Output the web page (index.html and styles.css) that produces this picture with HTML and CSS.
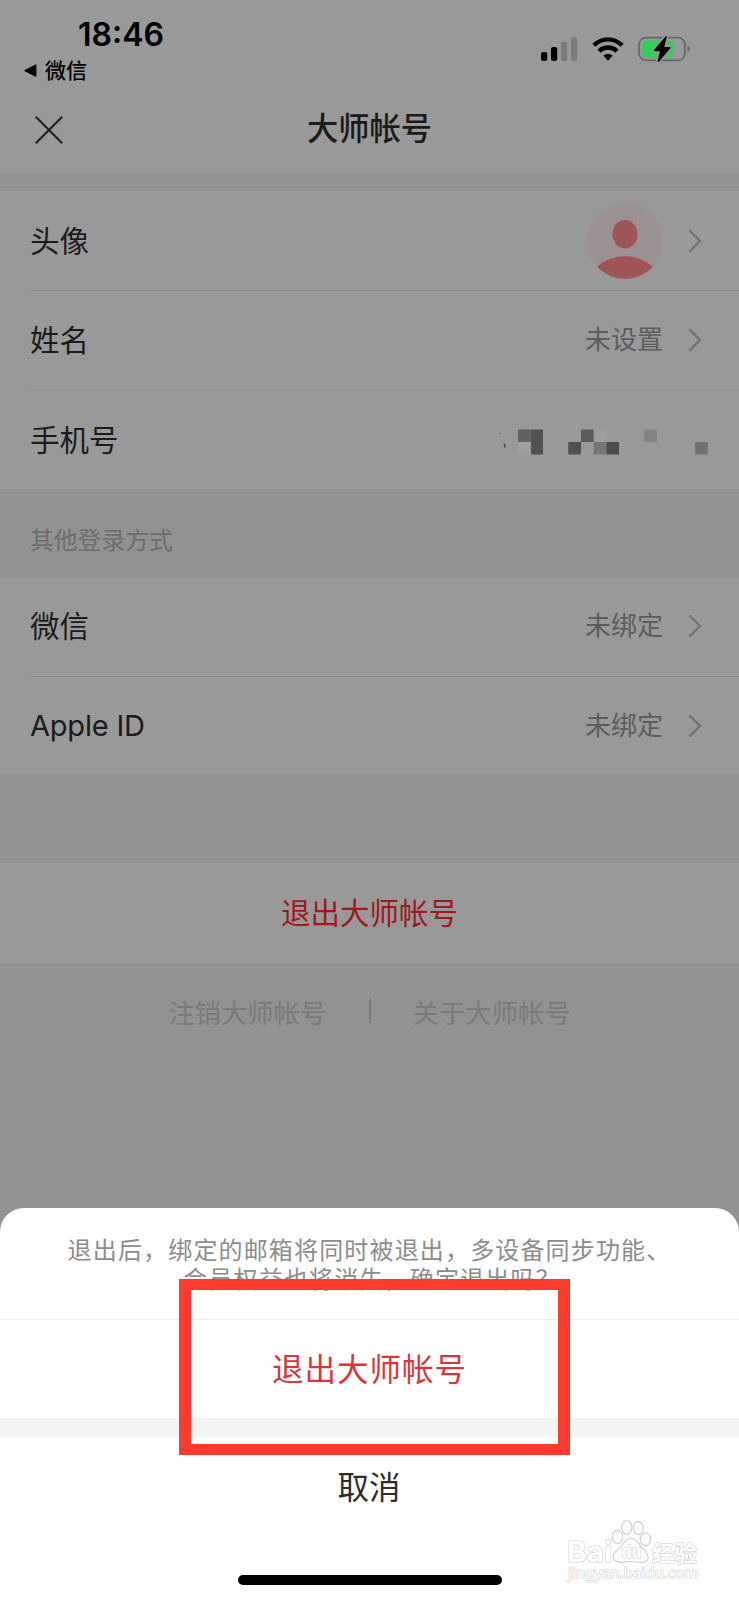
FILE: index.html
```html
<!DOCTYPE html>
<html lang="zh-CN">
<head>
<meta charset="utf-8">
<title>大师帐号</title>
<link rel="stylesheet" href="styles.css">
</head>
<body>
<div class="screen">
  <header class="top">
    <div class="status">
      <div class="status-left">
        <div class="clock">18:46</div>
        <div class="back-app">
          <svg width="14" height="13" viewBox="0 0 14 13"><path d="M12.4 .6V12.4Q12.4 13 11.6 12.7L.8 7.3Q-.2 6.7 .8 6.1L11.6 .4Q12.4 0 12.4 .6Z"/></svg>
          <span>微信</span>
        </div>
      </div>
      <div class="status-icons">
        <svg class="signal" width="37" height="24" viewBox="0 0 37 24">
          <rect x="0" y="15" width="6.2" height="9" rx="2"/>
          <rect x="10" y="10" width="6.2" height="14" rx="2"/>
          <rect x="20" y="5" width="6.2" height="19" rx="2" fill="#7b7b7b"/>
          <rect x="30" y="0" width="6.2" height="24" rx="2" fill="#7b7b7b"/>
        </svg>
        <svg class="wifi" width="32" height="24" viewBox="0 0 32 24">
          <g fill="none" stroke="#000" stroke-width="4.3">
            <path d="M1.8 8.3Q8.2 2.3 16 2.3T30.2 8.3"/>
            <path d="M7 14.1Q11 10.5 16 10.5T25 14.1"/>
          </g>
          <path d="M11.3 18.6Q16 14.8 20.7 18.6L16.8 23Q16 23.8 15.2 23Z"/>
        </svg>
        <svg class="battery" width="53" height="28" viewBox="0 0 53 28">
          <rect x="1" y="2.7" width="46" height="22.6" rx="7" fill="none" stroke="#666" stroke-width="1.7"/>
          <rect x="3.8" y="5.4" width="31.5" height="17.2" rx="4.2" fill="#33cc5a"/>
          <path d="M49.5 10.4Q52 11.4 52 14T49.5 17.6Z" fill="#666"/>
          <path d="M27.8 1.2L15.9 15.1Q15.5 16.2 16.6 16.2H22L19.5 26.5Q20 27.5 21.2 26.5L32.4 13.2Q32.8 12 31.7 12H26.3L28.8 1.7Q28.5 .6 27.8 1.2Z" stroke="#999" stroke-width="3" paint-order="stroke"/>
        </svg>
      </div>
    </div>
    <div class="navbar">
      <svg class="close" width="28" height="28" viewBox="0 0 28 28"><path d="M.8 .8L27.2 27.2M27.2 .8L.8 27.2"/></svg>
      <h1>大师帐号</h1>
    </div>
  </header>

  <section class="list">
    <div class="row">
      <span class="label">头像</span>
      <svg class="avatar" width="76" height="76" viewBox="0 0 76 76">
        <defs><clipPath id="disc"><circle cx="38" cy="38" r="38"/></clipPath></defs>
        <circle cx="38" cy="38" r="38" fill="#9b9092"/>
        <ellipse cx="38" cy="31.3" rx="12.5" ry="14.2" fill="#a15456"/>
        <ellipse cx="38" cy="86" rx="38" ry="32.7" fill="#a15456" clip-path="url(#disc)"/>
      </svg>
      <svg class="chevron" viewBox="0 0 14 24"><path d="M1.3 1.3L12 12L1.3 22.7"/></svg>
    </div>
    <div class="row lined">
      <span class="label">姓名</span>
      <span class="value">未设置</span>
      <svg class="chevron" viewBox="0 0 14 24"><path d="M1.3 1.3L12 12L1.3 22.7"/></svg>
    </div>
    <div class="row lined faint">
      <span class="label">手机号</span>
      <svg class="mosaic" width="211" height="26" viewBox="0 0 211 26">
        <path d="M.8 3.5L2.2 4.3L1.4 5.5ZM5.8 14L7.8 16L7.5 19L6 18Z" fill="#444"/>
        <path d="M20 .5h12.7v12.5h-12.7z" fill="#606060"/>
        <path d="M32.7 .5h12.3v25h-12.3z" fill="#515151"/>
        <path d="M20 13h12.7v12.5h-12.7zM95.7 .5h12.7v12.5h-12.7z" fill="#9e9e9e"/>
        <path d="M70.3 13h12.7v12.5h-12.7z" fill="#505050"/>
        <path d="M83 .5h12.7v12.5h-12.7z" fill="#5c5c5c"/>
        <path d="M95.7 13h12.7v12.5h-12.7z" fill="#76767a"/>
        <path d="M108.4 13h12.6v12.5h-12.6z" fill="#4c4c4c"/>
        <path d="M146.3 .5h12.7v12.5h-12.7z" fill="#838383"/>
        <path d="M197 13h12.7v12.5h-12.7z" fill="#717171"/>
      </svg>
    </div>
  </section>

  <h2>其他登录方式</h2>

  <section class="list second">
    <div class="row">
      <span class="label">微信</span>
      <span class="value">未绑定</span>
      <svg class="chevron" viewBox="0 0 14 24"><path d="M1.3 1.3L12 12L1.3 22.7"/></svg>
    </div>
    <div class="row lined">
      <span class="label latin">Apple ID</span>
      <span class="value">未绑定</span>
      <svg class="chevron" viewBox="0 0 14 24"><path d="M1.3 1.3L12 12L1.3 22.7"/></svg>
    </div>
  </section>

  <div class="logout">退出大师帐号</div>
  <nav class="links"><span>注销大师帐号</span><i></i><span>关于大师帐号</span></nav>

  <div class="sheet">
    <p class="message">退出后，绑定的邮箱将同时被退出，多设备同步功能、<br><span>会员权益也将消失，确定退出吗？</span></p>
    <div class="confirm">退出大师帐号</div>
    <div class="cancel">取消</div>
    <div class="home-bar"></div>
    <div class="highlight"></div>
    <svg class="watermark" width="140" height="70" viewBox="0 0 140 70">
      <g fill="#fff" stroke="#cfcfcf" stroke-width="1.2">
        <text x="2" y="42" class="wm-brand" textLength="45" lengthAdjust="spacingAndGlyphs">Bai</text>
        <g transform="translate(-2.5 0)">
          <ellipse cx="55" cy="17" rx="5.2" ry="6.6"/>
          <ellipse cx="64.3" cy="7.5" rx="5" ry="7"/>
          <ellipse cx="75.8" cy="8" rx="5" ry="6.6"/>
          <ellipse cx="83" cy="19.3" rx="5.2" ry="6.4"/>
          <path d="M61 23Q68.5 14 76 23Q78 27 82 30Q91 42 78 42.5Q68.500 40.500 60 42.500Q45 41 53.500 31Q59 27 61 23Z"/>
          <text x="59" y="38" class="wm-du" textLength="20" lengthAdjust="spacingAndGlyphs">du</text>
        </g>
        <text x="87" y="41" class="wm-cn" textLength="45" lengthAdjust="spacingAndGlyphs">经验</text>
        <text x="3" y="58" class="wm-url" textLength="130" lengthAdjust="spacingAndGlyphs">jingyan.baidu.com</text>
      </g>
    </svg>
  </div>
</div>
</body>
</html>
```
FILE: styles.css
```css
* { box-sizing: border-box; }
body { margin: 0; font-family: Inter, "Noto Sans CJK SC", sans-serif; }
h1, h2, p { margin: 0; font-weight: 400; }
svg { display: block; flex: none; overflow: visible; }

.screen {
  width: 739px;
  height: 1600px;
  display: flex;
  flex-direction: column;
  background: #929292;
  color: #1b1b1b;
  overflow: hidden;
}

.top { height: 173px; background: #999; margin-bottom: 18px; flex: none; }
.status { height: 88px; display: flex; justify-content: space-between; padding: 15px 48px 0 24px; color: #000; }
.clock { font-size: 32px; line-height: 39px; font-weight: 600; padding-left: 54px; }
.back-app { display: flex; align-items: center; gap: 7px; height: 32px; font-size: 21px; font-weight: 500; }
.back-app span { line-height: 32px; padding-top: 1px; }
.status-icons { display: flex; height: 28px; margin-top: 20px; align-items: center; }
.wifi { margin-left: 14px; }
.battery { margin-left: 14px; }

.navbar { height: 85px; display: flex; align-items: center; padding: 0 35px; }
.close { fill: none; stroke: #222; stroke-width: 2.2; margin-top: -1px; }
h1 { flex: 1; text-align: center; font-size: 31.3px; line-height: 44px; font-weight: 500; margin: -3px 28px 0 0; }

.list { background: #999; flex: none; }
.row { height: 99.33px; margin-left: 30px; padding-right: 37px; display: flex; align-items: center; }
.second .row { height: 99px; }
.lined { border-top: 1px solid #8b8b8b; }
.faint { border-color: #919191; padding-right: 30px; }
.label { flex: 1; font-size: 29.5px; line-height: 44px; }
.latin { font-size: 29px; letter-spacing: -.2px; }
.value { font-size: 26px; line-height: 38px; color: #5c5c5c; }
.chevron { width: 14px; height: 24px; margin-left: 25px; fill: none; stroke: #737373; stroke-width: 2.4; }
.mosaic { margin-top: 5px; }

h2 { height: 88px; padding: 34px 30px 0; font-size: 23.8px; line-height: 36px; color: #6d6d6d; flex: none; }

.logout { flex: none; margin-top: 88px; height: 100px; line-height: 100px; text-align: center; background: #999; color: #a0181d; font-size: 29.5px; }
.links { flex: none; height: 97px; display: flex; align-items: center; justify-content: center; gap: 42px; color: #7a7a7d; font-size: 26.4px; }
.links i { width: 2px; height: 24px; background: #7a7a7d; }

.sheet {
  position: relative;
  flex: none;
  height: 392px;
  margin-top: auto;
  background: #fff;
  border-radius: 24px 24px 0 0;
  display: flex;
  flex-direction: column;
  align-items: center;
}
.message { width: 100%; height: 111px; flex: none; padding-top: 28px; text-align: center; font-size: 24px; line-height: 29px; letter-spacing: 1.16px; color: #8c8c8c; white-space: nowrap; }
.message span { padding-left: 5px; }
.confirm { width: 100%; height: 118px; flex: none; border-top: 1px solid #ececec; border-bottom: 19px solid #f4f4f5; line-height: 99px; text-align: center; font-size: 31.500px; letter-spacing: 1px; color: #d8363b; }
.cancel { height: 102px; flex: none; padding-right: 1px; line-height: 101px; font-size: 31.5px; color: #2d2d2d; }
.home-bar { width: 264px; height: 10px; margin-top: 36px; border-radius: 5px; background: #000; }
.highlight { position: absolute; left: 179px; top: 71px; width: 391px; height: 176px; border: 11px solid #ff3b30; border-width: 11px 12px; }

.watermark { position: absolute; right: 34px; bottom: 10px; }
.watermark text { paint-order: stroke; }
.wm-brand { font: 700 29px Inter, sans-serif; }
.wm-du { font: 700 17px Inter, sans-serif; }
.wm-cn { font: 700 22px "Noto Sans CJK SC", sans-serif; }
.wm-url { font: 400 15px "Noto Sans", sans-serif; }
```
